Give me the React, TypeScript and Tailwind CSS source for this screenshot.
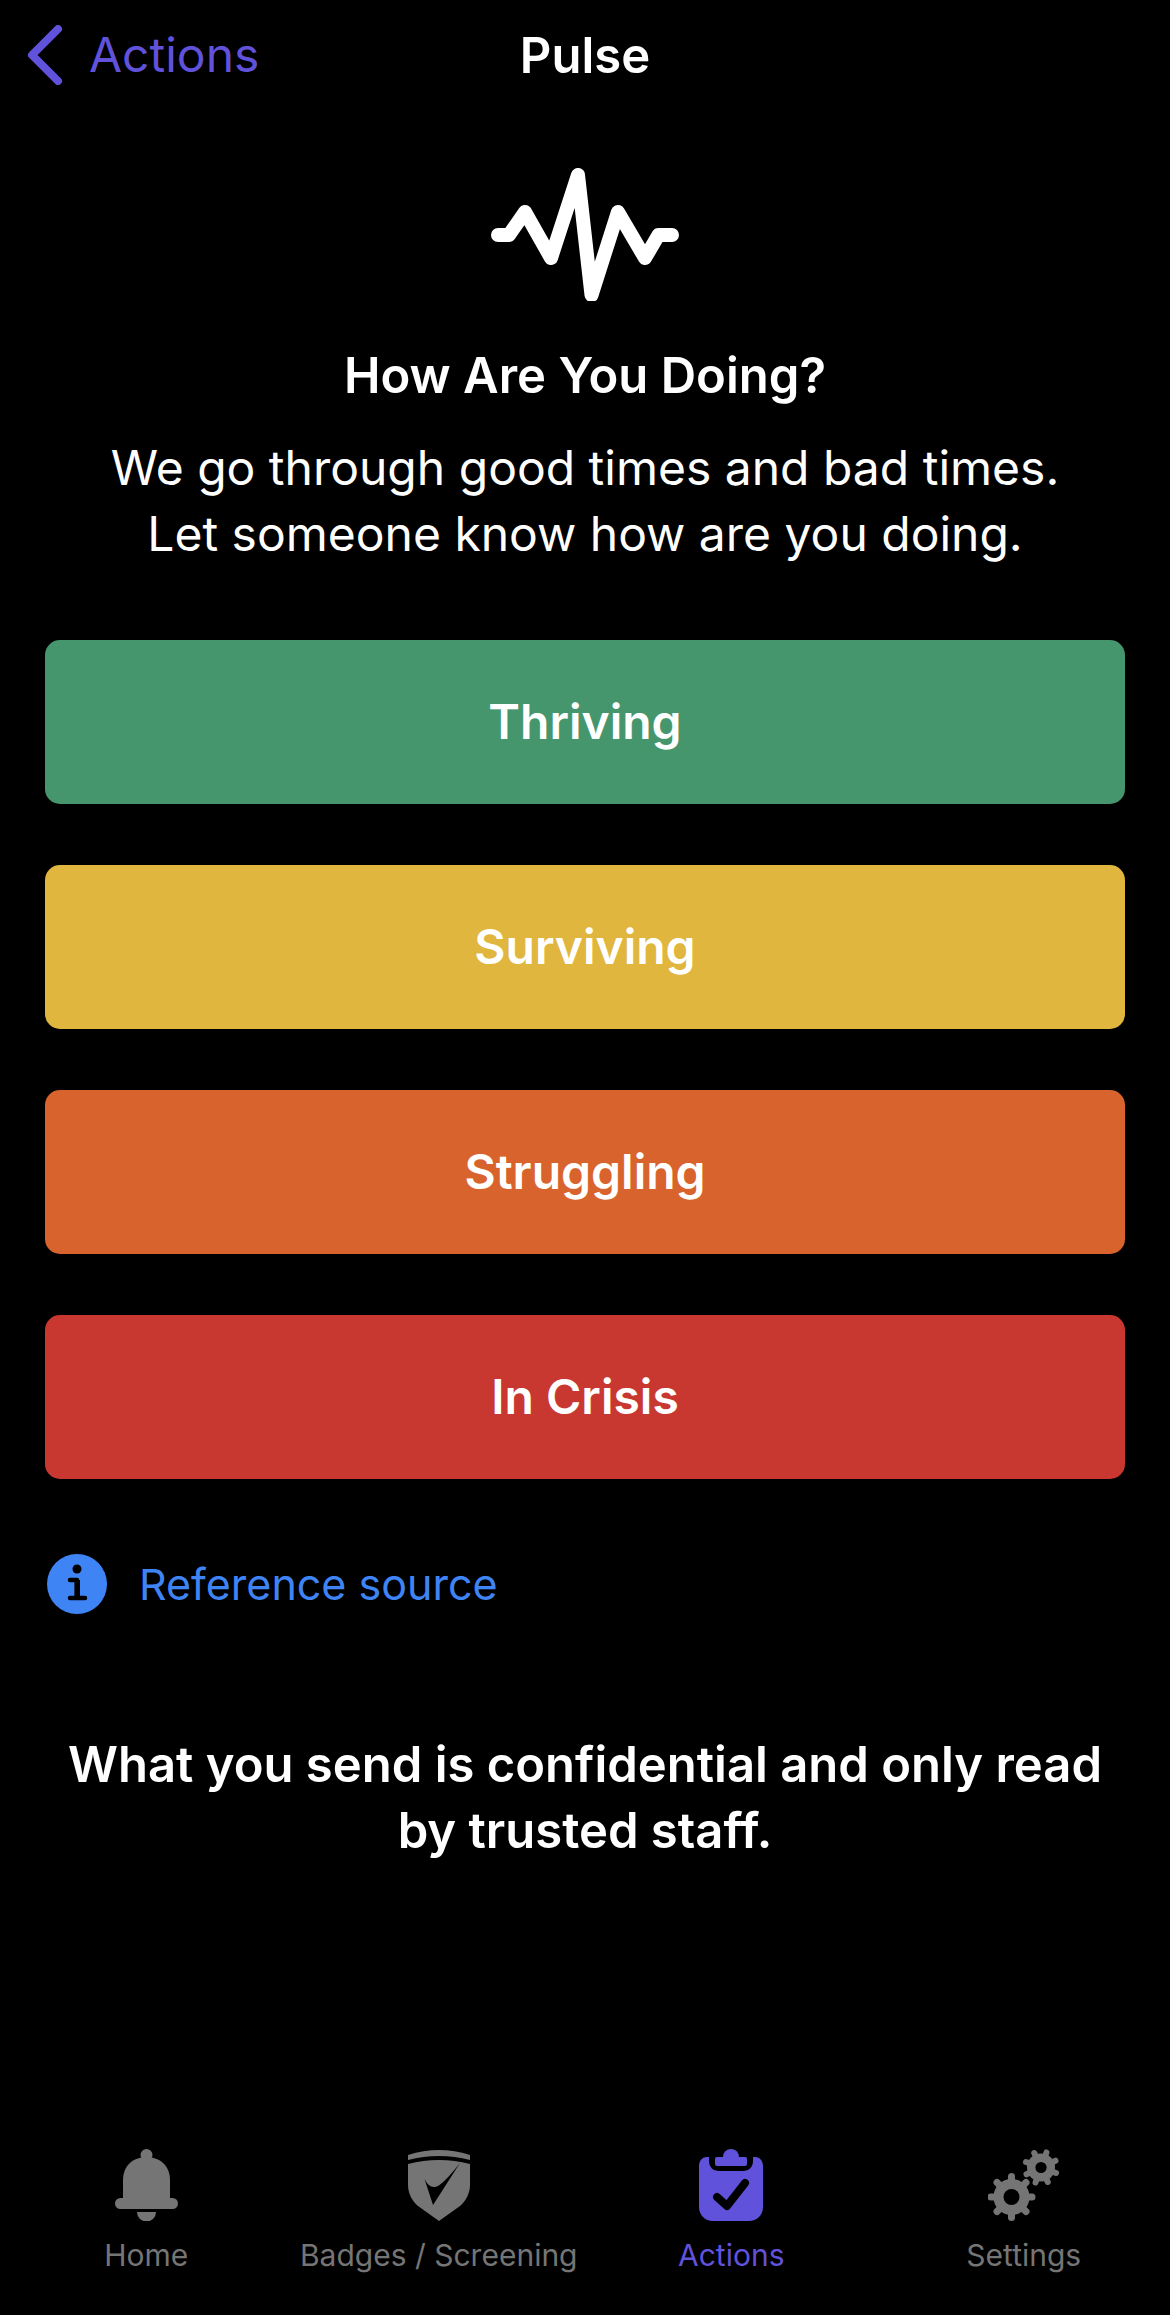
import React from 'react';

const moods = [
  { label: 'Thriving', color: 'bg-[#46966d]' },
  { label: 'Surviving', color: 'bg-[#e0b63e]' },
  { label: 'Struggling', color: 'bg-[#d9632c]' },
  { label: 'In Crisis', color: 'bg-[#c93830]' },
];

const BellIcon = () => (
  <svg width="63" height="72" viewBox="0 0 63 72" fill="#757575">
    <circle cx="31.5" cy="6" r="6" />
    <path d="M8 52V31C8 17 18 8 31.5 8S55 17 55 31V52Z" />
    <rect x="0" y="49" width="63" height="11" rx="5.5" />
    <path d="M22 63H41A9.5 9.5 0 0 1 22 63Z" />
  </svg>
);

const ShieldIcon = () => (
  <svg width="62" height="72" viewBox="0 0 62 72" fill="#757575">
    <path d="M0 6Q31 -4 62 6V11Q31 3 0 11Z" />
    <path
      fillRule="evenodd"
      d="M0 15Q31 7 62 15V36C62 44 58 52 52 57L31 72L10 57C4 52 0 44 0 36ZM52 14L25 56L16.5 30Q21 39 27 38Q34 37 52 14Z"
    />
  </svg>
);

const ClipboardIcon = () => (
  <svg width="64" height="72" viewBox="0 0 64 72">
    <path
      fill="#6152db"
      d="M10 8V12C10 18 14 22 20 22H44C50 22 54 18 54 12V8H56C61 8 64 12 64 17V58C64 66 58 72 50 72H14C6 72 0 66 0 58V17C0 12 3 8 8 8Z"
    />
    <circle cx="32" cy="8" r="8" fill="#6152db" />
    <rect x="16" y="8" width="32" height="9" rx="2" fill="#6152db" />
    <path d="M18 48L28 57L46 34" fill="none" stroke="#000" strokeWidth="8" strokeLinecap="round" strokeLinejoin="round" />
  </svg>
);

const Gear = ({ cx, cy, base, outer, hole, tooth, turn }: { cx: number; cy: number; base: number; outer: number; hole: number; tooth: number; turn: number }) => (
  <g>
    <circle cx={cx} cy={cy} r={base} fill="#757575" />
    {Array.from({ length: 8 }).map((_, i) => {
      const a = ((i * 45 + turn) * Math.PI) / 180;
      const end = outer - tooth / 2;
      return (
        <line
          key={i}
          x1={cx + Math.sin(a) * base * 0.8}
          y1={cy - Math.cos(a) * base * 0.8}
          x2={cx + Math.sin(a) * end}
          y2={cy - Math.cos(a) * end}
          stroke="#757575"
          strokeWidth={tooth}
          strokeLinecap="round"
        />
      );
    })}
    <circle cx={cx} cy={cy} r={hole} fill="#000" />
  </g>
);

const GearsIcon = () => (
  <svg width="72" height="72" viewBox="0 0 72 72">
    <Gear cx={23.5} cy={48} base={18} outer={24} hole={8} tooth={7} turn={0} />
    <Gear cx={53} cy={18.5} base={14} outer={19} hole={5.6} tooth={6} turn={20} />
  </svg>
);

const tabs = [
  { label: 'Home', icon: <BellIcon /> },
  { label: 'Badges / Screening', icon: <ShieldIcon /> },
  { label: 'Actions', icon: <ClipboardIcon />, active: true },
  { label: 'Settings', icon: <GearsIcon /> },
];

export default function App() {
  return (
    <div className="flex h-[2315px] w-[1170px] flex-col overflow-hidden bg-black font-['Inter',sans-serif] text-white">
      {/* Nav bar */}
      <div className="grid h-[110px] grid-cols-3 items-center">
        <div className="flex items-center gap-[24px] pl-[25px] text-[48px] leading-none text-[#6152db]">
          <svg width="40" height="60" viewBox="0 0 40 60" fill="none" stroke="#6152db" strokeWidth="8" strokeLinecap="round" strokeLinejoin="round">
            <path d="M33 4L7 30L33 56" />
          </svg>
          <span>Actions</span>
        </div>
        <div className="text-center text-[49px] font-semibold leading-none">Pulse</div>
      </div>

      <div className="flex flex-col items-center pt-[58px]">
        <svg width="190" height="133" viewBox="0 0 190 133" fill="none" stroke="#fff" strokeWidth="14" strokeLinecap="round" strokeLinejoin="round">
          <path d="M8 67H19L35 44L61 90L88 7L101.5 127L128 44L155 90L168.5 67H182" />
        </svg>
        <h1 className="mt-[47px] text-[49px] font-semibold leading-[56px]">How Are You Doing?</h1>
        <p className="mt-[31px] text-center text-[48px] leading-[66px]">
          We go through good times and bad times.
          <br />
          Let someone know how are you doing.
        </p>
      </div>

      {/* Mood buttons */}
      <div className="mt-[73px] flex flex-col gap-[61px] px-[45px]">
        {moods.map((m) => (
          <button key={m.label} className={`flex h-[164px] items-center justify-center rounded-[15px] text-[48px] font-semibold text-white ${m.color}`}>
            {m.label}
          </button>
        ))}
      </div>

      <div className="mt-[75px] flex items-center gap-[32px] pl-[47px]">
        <svg width="60" height="60" viewBox="0 0 60 60">
          <circle cx="30" cy="30" r="30" fill="#3f84f5" />
          <circle cx="30" cy="15" r="4.5" fill="#000" />
          <path d="M23 26H30V44M23 44H38" fill="none" stroke="#000" strokeWidth="4.5" strokeLinecap="round" strokeLinejoin="round" />
          <rect x="27.5" y="26" width="5.5" height="18" fill="#000" />
        </svg>
        <span className="text-[43px] leading-none text-[#3f84f5]">Reference source</span>
      </div>

      <p className="mx-auto mt-[118px] w-[1060px] text-center text-[49px] font-semibold leading-[66px]">
        What you send is confidential and only read by trusted staff.
      </p>

      {/* Tab bar */}
      <div className="mt-auto grid grid-cols-4 pb-[42px]">
        {tabs.map((t) => (
          <div key={t.label} className={`flex flex-col items-center gap-[16px] ${t.active ? 'text-[#6152db]' : 'text-[#757575]'}`}>
            <div className="flex h-[72px] items-center justify-center">{t.icon}</div>
            <span className="text-[30px] leading-[36px]">{t.label}</span>
          </div>
        ))}
      </div>
    </div>
  );
}
